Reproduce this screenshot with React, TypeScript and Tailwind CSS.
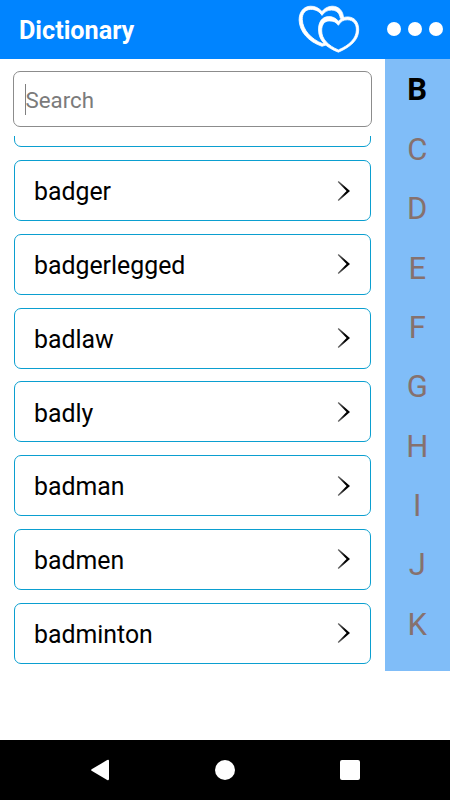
const words = [
  "badger",
  "badgerlegged",
  "badlaw",
  "badly",
  "badman",
  "badmen",
  "badminton",
];

const letters = ["B", "C", "D", "E", "F", "G", "H", "I", "J", "K"];

const HeartsIcon = () => (
  <svg width="70" height="58" viewBox="295 0 70 58" fill="#fff" stroke="#fff" strokeWidth="0.8">
    {/* back heart, left open where the front one covers it */}
    <path d="M343.600 18.500C343.300 10.500 338.500 6.100 332 6.200C327.500 6.400 324.200 8.600 322 11.600C319 7.900 315 6.100 310.500 6.200C303.500 6.400 299.100 12 299.100 20C299.300 31.500 308.500 41.800 322 46.300L327.500 44.600L325.700 43L322.500 43.600C311.500 39.300 302.600 30 302.300 19.500C302.100 13.500 305.300 9.600 310.500 9.400C315.500 9.200 319.500 11.500 322 15.400C324.500 11.800 327.500 10 331.500 10.100C336.500 10.200 339.500 13 340.300 18.300Z" />
    <path
      fillRule="evenodd"
      d="M338.400 21.300C335.800 17.800 332 16.400 328.500 16.600C322 16.900 318.400 22 318.500 30C318.700 41 326.500 47.600 338.400 52.200C350.500 47 358.700 40 358.700 30C358.800 22 354.500 17.100 347.800 16.900C344 16.800 340.700 18.400 338.400 21.300ZM338.400 25.300C340.700 21.500 343.600 19.700 347.500 19.800C353.500 20 356.500 24 356.400 30C356.200 38.500 349.500 45.100 338.400 49.900C328 45.500 321.800 39 321.700 31C321.600 24.500 324.400 21 329 20.900C333.500 20.800 336.300 22.300 338.400 25.300Z"
    />
  </svg>
);

const ChevronIcon = () => (
  <svg width="14" height="22" viewBox="0 0 14 22">
    <defs>
      <linearGradient id="chevron" x1="0" x2="1" y1="0" y2="0">
        <stop offset="0" stopColor="#777" />
        <stop offset="0.6" stopColor="#000" />
      </linearGradient>
    </defs>
    <path d="M0.700 1.900L1.600 1.100L13 10.900L1.600 20.900L0.700 20.100L9.600 10.900Z" fill="url(#chevron)" />
  </svg>
);

const WordCard = ({ word }: { word: string }) => (
  <li className="flex h-[61px] shrink-0 items-center justify-between rounded-[7px] border-[1.2px] border-[#0b9fd0] pr-[18.500px] pl-[19px]">
    <span className="pt-[4.400px] text-[24.850px] leading-none">{word}</span>
    <ChevronIcon />
  </li>
);

const App = () => {
  return (
    <div className="flex h-[800px] w-[450px] flex-col overflow-hidden bg-white font-['Roboto',sans-serif] text-black">
      <header className="flex h-[58.500px] shrink-0 items-center bg-[#0084ff] pl-[19px] text-white">
        <h1 className="pt-[3px] text-[25.200px] leading-none font-bold">Dictionary</h1>
        <div className="ml-auto flex h-full items-center">
          <HeartsIcon />
          <div className="ml-[22px] flex gap-[7px] pr-[7.500px]">
            <span className="size-[14px] rounded-full bg-white" />
            <span className="size-[14px] rounded-full bg-white" />
            <span className="size-[14px] rounded-full bg-white" />
          </div>
        </div>
      </header>

      <main className="flex min-h-0 flex-1">
        <div className="w-[384.500px] pt-[12.500px]">
          <div className="ml-[12.500px] flex h-[56px] w-[359px] items-center rounded-[7px] border border-[#8c8c8c] pl-[11px]">
            <span className="h-[31px] w-px bg-[#808080]" />
            <span className="pt-[2px] text-[22.300px] leading-none text-[#7b7b7b]">Search</span>
          </div>

          <div className="mt-[9px] h-[532px] overflow-hidden">
            <ul className="-mt-[49.700px] flex flex-col gap-[12.750px] pr-[14px] pl-[14px]">
              <li className="h-[61px] shrink-0 rounded-[7px] border-[1.2px] border-[#0b9fd0]" />
              {words.map((word) => (
                <WordCard key={word} word={word} />
              ))}
            </ul>
          </div>
        </div>

        <nav className="flex h-[612.500px] flex-1 flex-col items-center bg-[#80bdf8] pt-[2.400px]">
          {letters.map((letter, i) => (
            <span
              key={letter}
              className={
                i === 0
                  ? "flex h-[59.400px] items-center text-[31px] font-bold text-black"
                  : "flex h-[59.400px] items-center text-[31px] text-[#86716e]"
              }
            >
              {letter}
            </span>
          ))}
        </nav>
      </main>

      <footer className="flex h-[60px] shrink-0 items-center bg-black pl-[90px]">
        <svg width="20" height="22" viewBox="0 0 20 22" fill="#fff">
          <path d="M1.600 10.200L17.200 1.100Q19 0.300 19 2V20Q19 21.700 17.200 20.900L1.600 11.800Q0.600 11 1.600 10.200Z" />
        </svg>
        <span className="ml-[105px] size-5 rounded-full bg-white" />
        <span className="ml-[105px] size-5 rounded-[2px] bg-white" />
      </footer>
    </div>
  );
};

export default App;
